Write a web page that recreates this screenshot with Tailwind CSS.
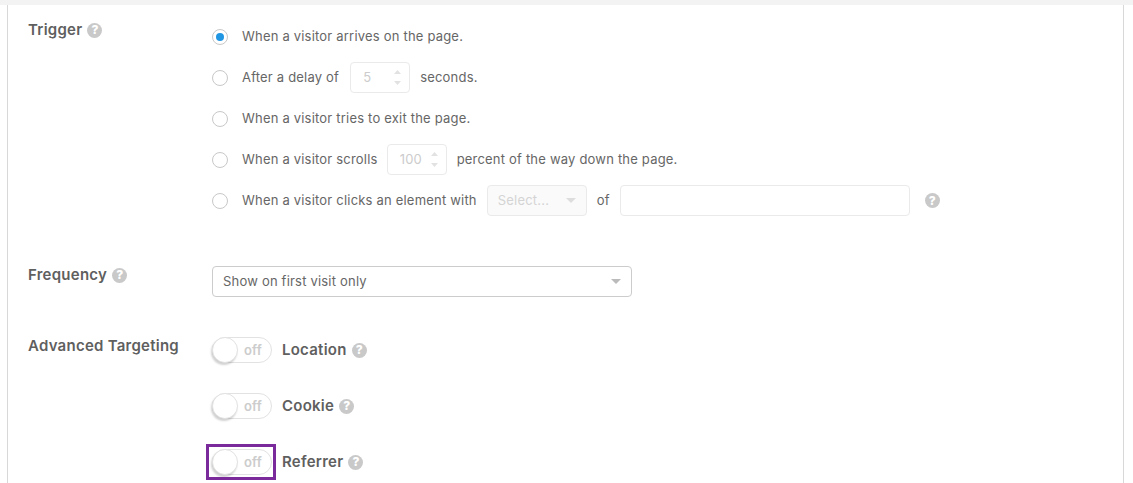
<!DOCTYPE html>
<html lang="en">
<head>
    <meta charset="UTF-8">
    <title>Popup settings</title>
    <script src="https://cdn.jsdelivr.net/npm/@tailwindcss/browser@4"></script>
</head>
<body class="bg-white h-[483px] overflow-hidden font-['Inter',sans-serif] text-[13px] tracking-[0.2px] text-[#666] antialiased">
    <div class="h-[5px] bg-[#f3f3f3]"></div>
    <div class="ml-[7px] w-[1117px] h-[478px] border-x border-[#d8d8d8] pl-5 pt-4">

        <!-- Trigger -->
        <div class="flex">
            <div class="w-[184px] flex items-center gap-[5px] h-[18px] font-semibold text-[15px] tracking-[0.25px] text-[#5f5f5f]">
                Trigger
                <span class="w-[15px] h-[15px] rounded-full bg-[#c9c9c9] text-white text-[12px] tracking-normal font-extrabold flex items-center justify-center">?</span>
            </div>
            <div class="flex flex-col gap-[10px]">
                <div class="h-[31px] flex items-center">
                    <span class="w-4 h-4 rounded-full border border-[#c8c8c8] flex items-center justify-center mr-[14px]"><span class="w-2 h-2 rounded-full bg-[#2196e3]"></span></span>
                    When a visitor arrives on the page.
                </div>
                <div class="h-[31px] flex items-center">
                    <span class="w-4 h-4 rounded-full border border-[#c8c8c8] mr-[14px]"></span>
                    After a delay of
                    <span class="w-[60px] h-[31px] ml-[11px] mr-[10px] border border-[#eaeaea] rounded flex items-center justify-between pl-3 pr-2 text-[#ccc]">
                        5
                        <span class="flex flex-col gap-[7px]">
                            <svg width="7" height="4" viewBox="0 0 7 4"><path d="M3.5 0L7 4H0z" fill="#e2e2e2"/></svg>
                            <svg width="7" height="4" viewBox="0 0 7 4"><path d="M0 0h7L3.5 4z" fill="#e2e2e2"/></svg>
                        </span>
                    </span>
                    seconds.
                </div>
                <div class="h-[31px] flex items-center">
                    <span class="w-4 h-4 rounded-full border border-[#c8c8c8] mr-[14px]"></span>
                    When a visitor tries to exit the page.
                </div>
                <div class="h-[31px] flex items-center">
                    <span class="w-4 h-4 rounded-full border border-[#c8c8c8] mr-[14px]"></span>
                    When a visitor scrolls
                    <span class="w-[60px] h-[31px] ml-[9px] mr-[10px] border border-[#eaeaea] rounded flex items-center justify-between pl-3 pr-2 text-[#ccc]">
                        100
                        <span class="flex flex-col gap-[7px]">
                            <svg width="7" height="4" viewBox="0 0 7 4"><path d="M3.5 0L7 4H0z" fill="#e2e2e2"/></svg>
                            <svg width="7" height="4" viewBox="0 0 7 4"><path d="M0 0h7L3.5 4z" fill="#e2e2e2"/></svg>
                        </span>
                    </span>
                    percent of the way down the page.
                </div>
                <div class="h-[31px] flex items-center">
                    <span class="w-4 h-4 rounded-full border border-[#c8c8c8] mr-[14px]"></span>
                    When a visitor clicks an element with
                    <span class="w-[100px] h-[31px] ml-[10px] mr-[10px] border border-[#eaeaea] bg-[#fafafa] rounded flex items-center justify-between pl-[10px] pr-[10px] text-[#d4d4d4]">
                        Select...
                        <svg width="10" height="5" viewBox="0 0 10 5"><path d="M0 0h10L5 5z" fill="#ddd"/></svg>
                    </span>
                    of
                    <span class="w-[290px] h-[31px] ml-[10px] border border-[#eaeaea] rounded"></span>
                    <span class="w-[15px] h-[15px] ml-[15px] rounded-full bg-[#c9c9c9] text-white text-[12px] tracking-normal font-extrabold flex items-center justify-center">?</span>
                </div>
            </div>
        </div>

        <!-- Frequency -->
        <div class="flex mt-[50px]">
            <div class="w-[184px] flex items-center gap-[5px] h-[18px] font-semibold text-[15px] tracking-[0.25px] text-[#5f5f5f]">
                Frequency
                <span class="w-[15px] h-[15px] rounded-full bg-[#c9c9c9] text-white text-[12px] tracking-normal font-extrabold flex items-center justify-center">?</span>
            </div>
            <div class="w-[420px] h-[31px] border border-[#ccc] rounded flex items-center justify-between pl-[10px] pr-[10px]">
                Show on first visit only
                <svg width="10" height="5" viewBox="0 0 10 5"><path d="M0 0h10L5 5z" fill="#bbb"/></svg>
            </div>
        </div>

        <!-- Advanced Targeting -->
        <div class="flex mt-10">
            <div class="w-[184px] h-[18px] font-semibold text-[15px] tracking-[0.25px] text-[#5f5f5f] flex items-center">Advanced Targeting</div>
            <div class="flex flex-col gap-[30px]">
                <div class="h-[26px] flex items-center">
                    <span class="relative w-[60px] h-[26px] rounded-full border border-[#e2e2e2] flex items-center justify-end pr-[9px] pt-[2px] text-[#ccc] font-semibold">off<span class="absolute -left-px -top-px w-[26px] h-[26px] rounded-full bg-white border border-[#e2e2e2] shadow-[-1px_2px_2px_rgba(0,0,0,0.18)]"></span></span>
                    <span class="ml-[10px] font-semibold text-[15px] tracking-[0.25px] text-[#5f5f5f]">Location</span>
                    <span class="w-[15px] h-[15px] ml-[5px] rounded-full bg-[#c9c9c9] text-white text-[12px] tracking-normal font-extrabold flex items-center justify-center">?</span>
                </div>
                <div class="h-[26px] flex items-center">
                    <span class="relative w-[60px] h-[26px] rounded-full border border-[#e2e2e2] flex items-center justify-end pr-[9px] pt-[2px] text-[#ccc] font-semibold">off<span class="absolute -left-px -top-px w-[26px] h-[26px] rounded-full bg-white border border-[#e2e2e2] shadow-[-1px_2px_2px_rgba(0,0,0,0.18)]"></span></span>
                    <span class="ml-[10px] font-semibold text-[15px] tracking-[0.25px] text-[#5f5f5f]">Cookie</span>
                    <span class="w-[15px] h-[15px] ml-[5px] rounded-full bg-[#c9c9c9] text-white text-[12px] tracking-normal font-extrabold flex items-center justify-center">?</span>
                </div>
                <div class="h-[26px] flex items-center">
                    <span class="relative w-[60px] h-[26px] rounded-full border border-[#e2e2e2] flex items-center justify-end pr-[9px] pt-[2px] text-[#ccc] font-semibold">off<span class="absolute -left-px -top-px w-[26px] h-[26px] rounded-full bg-white border border-[#e2e2e2] shadow-[-1px_2px_2px_rgba(0,0,0,0.18)]"></span>
                        <!-- highlight box, sits over the toggle -->
                        <span class="absolute -left-[7px] -right-[5px] -top-[6px] -bottom-[6px] border-[3px] border-[#7b2a9b]"></span>
                    </span>
                    <span class="ml-[10px] font-semibold text-[15px] tracking-[0.25px] text-[#5f5f5f]">Referrer</span>
                    <span class="w-[15px] h-[15px] ml-[5px] rounded-full bg-[#c9c9c9] text-white text-[12px] tracking-normal font-extrabold flex items-center justify-center">?</span>
                </div>
            </div>
        </div>
    </div>
</body>
</html>
